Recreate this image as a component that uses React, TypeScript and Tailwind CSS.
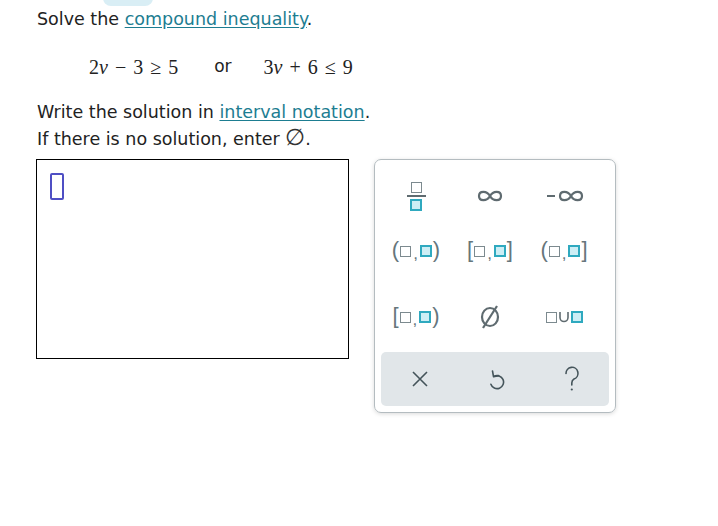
import React from "react"

const GrayBox = () => (
  <span className="inline-block w-[11px] h-[11px] border-[1.5px] border-[#7c8a8f]" />
)
const TealBox = () => (
  <span className="inline-block w-[12px] h-[12px] border-2 border-[#2fa9bf] bg-[#cdeef5]" />
)

const Interval = ({ open, close }: { open: string; close: string }) => (
  <span className="flex items-center text-[22px] text-[#66767c] leading-none font-['Liberation_Sans',sans-serif]">
    <span className="-mt-[3px] mr-[1px]">{open}</span>
    <GrayBox />
    <span className="text-[17px] mx-[2px] mt-[5px]">,</span>
    <TealBox />
    <span className="-mt-[3px] ml-[1px]">{close}</span>
  </span>
)

const Infinity = () => (
  <svg width="26" height="14" viewBox="0 0 26 14">
    <path
      d="M13 7 C10 1.5 2 1.5 2 7 C2 12.5 10 12.5 13 7 C16 1.5 24 1.5 24 7 C24 12.5 16 12.5 13 7 Z"
      fill="none"
      stroke="#5f6b70"
      strokeWidth="2.2"
    />
  </svg>
)

const Key = ({ children }: { children: React.ReactNode }) => (
  <div className="flex items-center justify-center h-[50px]">{children}</div>
)

export default function App() {
  return (
    <div className="w-[718px] h-[526px] bg-white relative font-['DejaVu_Sans',Verdana,sans-serif] text-[#222] text-[17.5px]">
      <div className="absolute left-[103px] top-[-10px] w-[50px] h-[16px] rounded-[8px] bg-[#d9eef5]" />
      <div className="pl-[37px] pt-[8px]">
        <p className="leading-[22px]">
          Solve the{" "}
          <span className="text-[#1d7d91] underline underline-offset-2">compound inequality</span>.
        </p>
        <div className="flex items-center mt-[22px] ml-[52px] h-[30px] font-['Liberation_Serif',serif] text-[20px] text-[#222]">
          <span>
            2<i>v</i>
            <span className="mx-[7px]">−</span>3<span className="mx-[7px]">≥</span>5
          </span>
          <span className="ml-[36px] mr-[32px] font-['DejaVu_Sans',sans-serif] text-[17px]">or</span>
          <span>
            3<i>v</i>
            <span className="mx-[7px]">+</span>6<span className="mx-[7px]">≤</span>9
          </span>
        </div>
        <p className="mt-[19px] leading-[22px]">
          Write the solution in{" "}
          <span className="text-[#1d7d91] underline underline-offset-2">interval notation</span>.
        </p>
        <p className="mt-[5px] h-[22px] leading-[22px]">
          If there is no solution, enter{" "}
          <span className="font-['DejaVu_Sans',sans-serif] text-[23px] leading-[0] font-light text-[#333]">∅</span>.
        </p>
      </div>
      <div className="flex mt-[9px] ml-[36px] items-start">
        <div className="w-[313px] h-[200px] border border-black pl-[13px] pt-[13px]">
          <div className="w-[14px] h-[27px] border-2 border-[#4f4fc4] rounded-[2px]" />
        </div>
        <div className="ml-[25px] w-[242px] h-[254px] border border-[#b4bcc0] rounded-[7px] shadow-[0_1px_4px_rgba(0,0,0,0.15)] flex flex-col">
          <div className="grid grid-cols-[74px_74px_74px] pl-[4px] mt-[11px]">
            <Key>
              <span className="flex flex-col items-center">
                <span className="w-[11px] h-[11px] border-[1.5px] border-[#7c8a8f]" />
                <span className="w-[19px] h-[2px] bg-[#5f6b70] my-[2px]" />
                <span className="w-[12px] h-[12px] border-2 border-[#2fa9bf] bg-[#cdeef5]" />
              </span>
            </Key>
            <Key>
              <Infinity />
            </Key>
            <Key>
              <span className="flex items-center ml-[2px]">
                <span className="w-[8px] h-[2.5px] bg-[#5f6b70] mr-[3px]" />
                <Infinity />
              </span>
            </Key>
          </div>
          <div className="grid grid-cols-[74px_74px_74px] pl-[4px] mt-[5px]">
            <Key>
              <Interval open="(" close=")" />
            </Key>
            <Key>
              <Interval open="[" close="]" />
            </Key>
            <Key>
              <Interval open="(" close="]" />
            </Key>
          </div>
          <div className="grid grid-cols-[74px_74px_74px] pl-[4px] mt-[16px]">
            <Key>
              <Interval open="[" close=")" />
            </Key>
            <Key>
              <svg width="22" height="26" viewBox="0 0 22 26">
                <ellipse cx="11" cy="13" rx="8" ry="9" fill="none" stroke="#5f6b70" strokeWidth="2.2" />
                <line x1="18" y1="2" x2="4" y2="24" stroke="#5f6b70" strokeWidth="2.2" />
              </svg>
            </Key>
            <Key>
              <span className="flex items-center">
                <GrayBox />
                <svg width="12" height="12" viewBox="0 0 12 12" className="mx-[1px]">
                  <path d="M2 1 V6.5 A4 4 0 0 0 10 6.5 V1" fill="none" stroke="#5f6b70" strokeWidth="1.6" />
                </svg>
                <TealBox />
              </span>
            </Key>
          </div>
          <div className="mt-auto mb-[6px] mx-[6px] h-[54px] rounded-[5px] bg-[#e1e6e9] grid grid-cols-3 items-center">
            <div className="flex justify-center pl-[2px]">
              <svg width="16" height="16" viewBox="0 0 16 16">
                <path d="M1 1 L15 15 M15 1 L1 15" stroke="#44545a" strokeWidth="1.6" />
              </svg>
            </div>
            <div className="flex justify-center pl-[4px]">
              <svg width="18" height="22" viewBox="0 0 18 22">
                <path d="M6 8.4 A6.5 6.5 0 1 1 2.9 16.2" fill="none" stroke="#44545a" strokeWidth="1.6" strokeLinecap="round" />
                <path d="M4.5 3 L5.5 8.6 L10.5 7.6" fill="none" stroke="#44545a" strokeWidth="1.6" strokeLinecap="round" strokeLinejoin="round" />
              </svg>
            </div>
            <div className="flex justify-center pl-[2px]">
              <svg width="16" height="26" viewBox="0 0 16 26">
                <path d="M2 7.5 A6 6 0 1 1 10 13 C8.2 14 7.8 15 7.8 17 V19" fill="none" stroke="#44545a" strokeWidth="1.6" strokeLinecap="round" />
                <circle cx="7.8" cy="23.5" r="1.1" fill="#44545a" />
              </svg>
            </div>
          </div>
        </div>
      </div>
    </div>
  )
}
